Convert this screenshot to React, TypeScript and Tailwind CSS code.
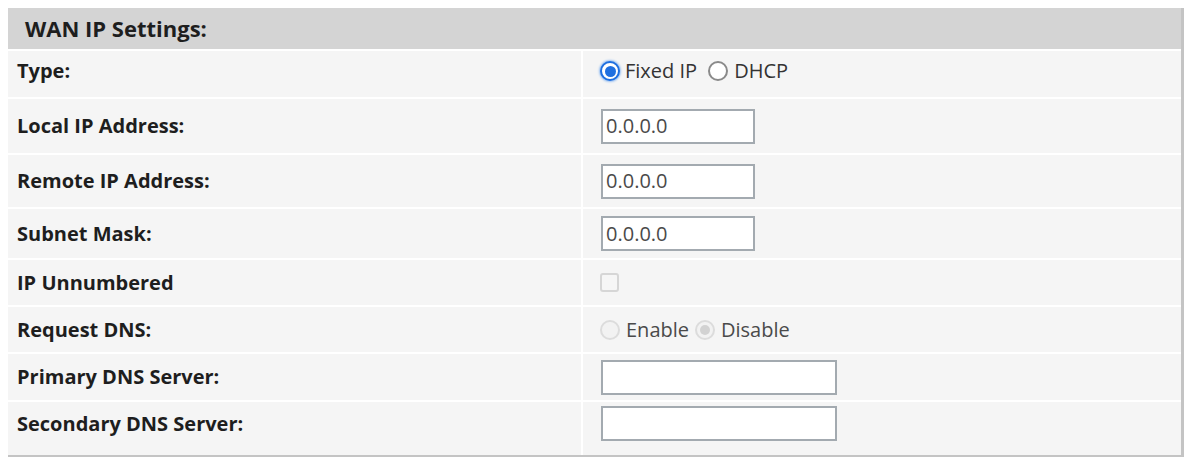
import type { ReactNode } from 'react';

const font = { fontFamily: '"Open Sans", "Noto Sans", sans-serif' };

function Row({ label, h, pb = '', children }: { label: string; h: string; pb?: string; children?: ReactNode }) {
  return (
    <div className={`flex border-t-2 border-white ${h}`}>
      <div className={`w-[575px] flex items-center pl-[9px] text-[20px] font-bold text-[#1e1e1e] border-r-2 border-white ${pb}`}>
        {label}
      </div>
      <div className={`flex-1 flex items-center pl-[18px] ${pb}`}>{children}</div>
    </div>
  );
}

function TextBox({ value = '', wide }: { value?: string; wide?: boolean }) {
  return (
    <div
      className={`h-[35px] ${wide ? 'w-[236px]' : 'w-[154px]'} bg-white border-2 border-[#a3aab0] flex items-center px-[3px] text-[20px] text-[#4a4a4a]`}
    >
      {value}
    </div>
  );
}

function Radio({ checked, disabled }: { checked?: boolean; disabled?: boolean }) {
  if (disabled) {
    return (
      <span className="w-[20px] h-[20px] rounded-full border-2 border-[#dcdcdc] bg-[#f2f2f2] flex items-center justify-center">
        {checked && <span className="w-[10px] h-[10px] rounded-full bg-[#d2d2d2]" />}
      </span>
    );
  }
  return (
    <span
      className={`w-[20px] h-[20px] rounded-full border-2 flex items-center justify-center bg-white ${checked ? 'border-[#1f6fe0] shadow-[0_0_2px_1px_#9cc2f2]' : 'border-[#8a8a8a]'}`}
    >
      {checked && <span className="w-[11px] h-[11px] rounded-full bg-[#1f6fe0]" />}
    </span>
  );
}

export default function App() {
  return (
    <div className="w-[1192px] h-[459px] bg-white pt-[8px] pl-[8px]" style={font}>
      <div className="w-[1176px] bg-[#f5f5f5] border-r-[3px] border-b-[2px] border-[#c4c4c4]">
        <div className="h-[41px] bg-[#d4d4d4] flex items-center pl-[17px] text-[22px] font-bold text-[#1e1e1e]">
          WAN IP Settings:
        </div>
        <Row label="Type:" h="h-[48px]" pb="pb-[6px]">
          <div className="flex items-center text-[20px] text-[#333] -ml-[1px]">
            <Radio checked />
            <span className="ml-[5px]">Fixed IP</span>
            <span className="ml-[11px]">
              <Radio />
            </span>
            <span className="ml-[6px]">DHCP</span>
          </div>
        </Row>
        <Row label="Local IP Address:" h="h-[56px]">
          <TextBox value="0.0.0.0" />
        </Row>
        <Row label="Remote IP Address:" h="h-[54px]">
          <TextBox value="0.0.0.0" />
        </Row>
        <Row label="Subnet Mask:" h="h-[51px]">
          <TextBox value="0.0.0.0" />
        </Row>
        <Row label="IP Unnumbered" h="h-[47px]">
          <span className="w-[19px] h-[19px] -ml-[1px] border-2 border-[#d6d6d6] rounded-[3px] bg-[#f6f6f6]" />
        </Row>
        <Row label="Request DNS:" h="h-[47px]">
          <div className="flex items-center text-[20px] text-[#4a4a4a] -ml-[1px]">
            <Radio disabled />
            <span className="ml-[6px]">Enable</span>
            <span className="ml-[6px]">
              <Radio checked disabled />
            </span>
            <span className="ml-[6px]">Disable</span>
          </div>
        </Row>
        <Row label="Primary DNS Server:" h="h-[48px]">
          <TextBox wide />
        </Row>
        <Row label="Secondary DNS Server:" h="h-[55px]" pb="pb-[10px]">
          <TextBox wide />
        </Row>
      </div>
    </div>
  );
}
